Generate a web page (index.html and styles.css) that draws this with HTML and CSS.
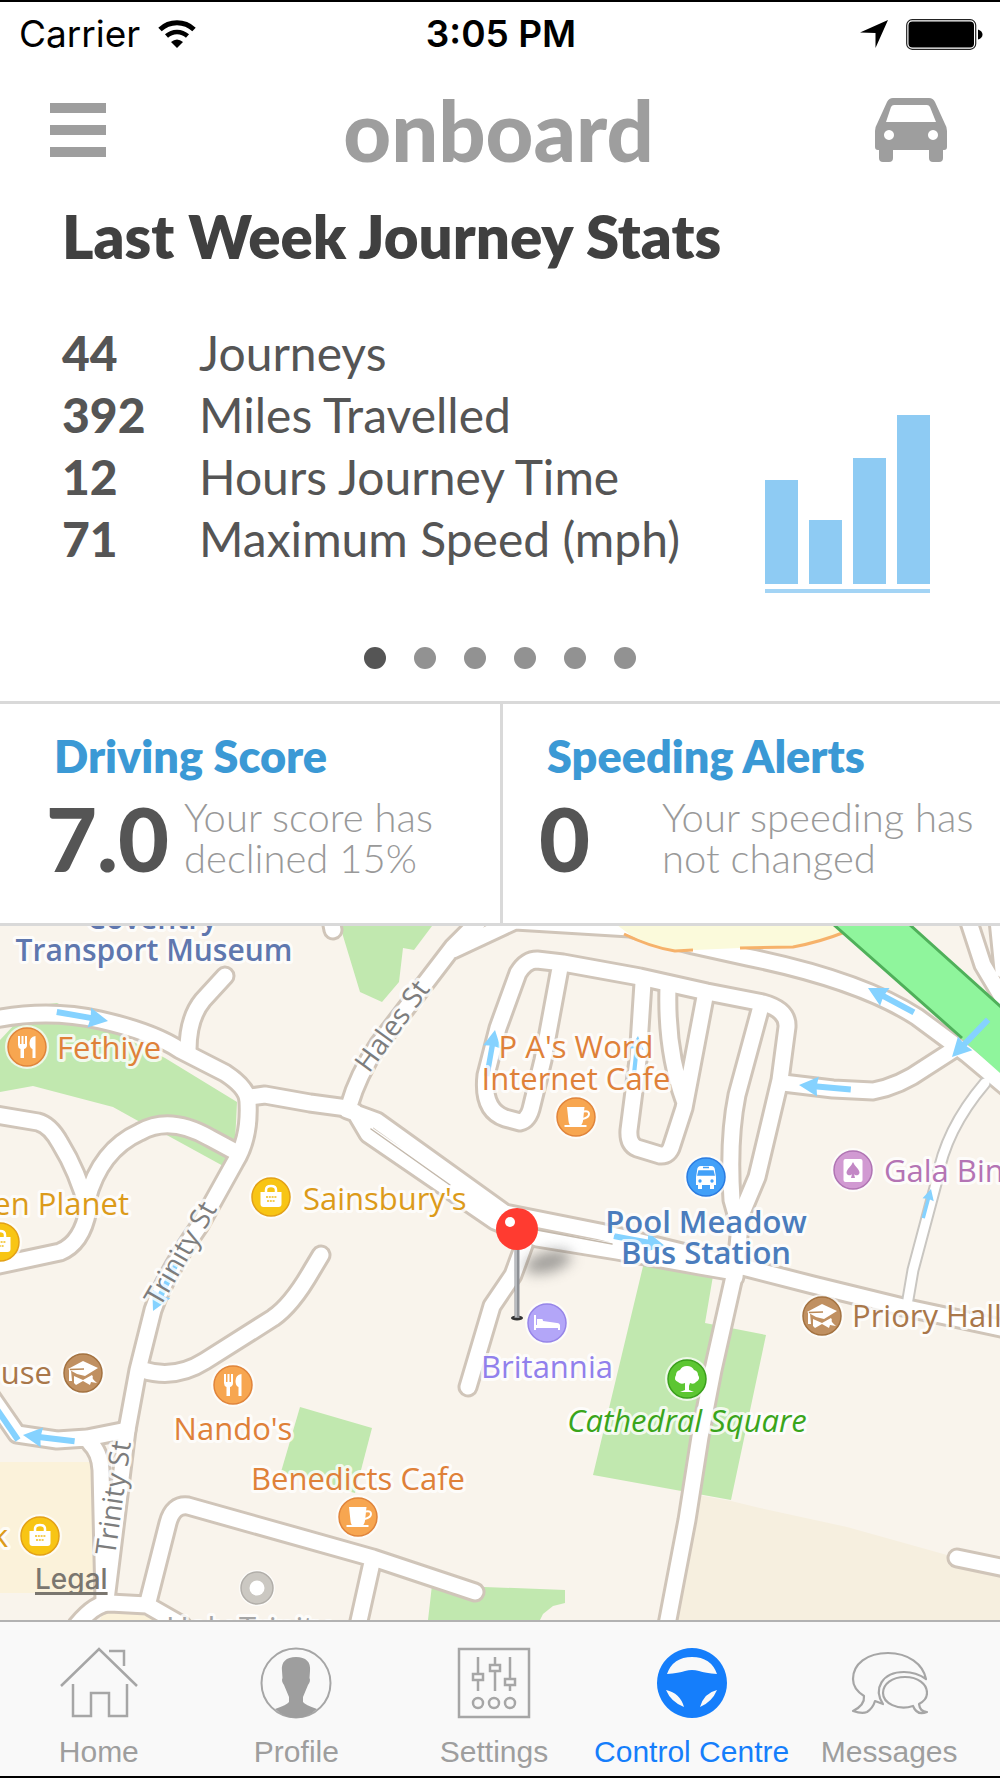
FILE: index.html
```html
<!DOCTYPE html>
<html lang="en">
<head>
<meta charset="utf-8">
<meta name="viewport" content="width=device-width, initial-scale=1">
<title>onboard – Control Centre</title>
<link rel="stylesheet" href="styles.css">
</head>
<body>
<div class="app">
  <div class="status">
    <div class="status-left">
      <span>Carrier</span>
      <svg class="wifi" viewBox="0 0 38 28" aria-hidden="true">
        <path d="M2 9.500A25 25 0 0 1 36 9.500" fill="none" stroke="#000" stroke-width="5"/>
        <path d="M8.500 16A15.500 15.500 0 0 1 29.500 16" fill="none" stroke="#000" stroke-width="4.500"/>
        <path d="M19 28L13 22Q19 17 25 22Z"/>
      </svg>
    </div>
    <span class="clock">3:05 PM</span>
    <div class="status-right">
      <svg class="locate" viewBox="0 0 28 28" aria-hidden="true"><path d="M28 0L15.500 28V13L0 12.500Z"/></svg>
      <svg class="battery" viewBox="0 0 77 31" aria-hidden="true">
        <rect x="0.700" y="0.700" width="69" height="29.600" rx="5.500" fill="#fff" stroke="#222" stroke-width="1.200"/>
        <rect x="2.500" y="2.500" width="65.500" height="26" rx="4"/>
        <path d="M72 10.500Q76.500 12 76.500 15.500T72 20.500Z"/>
      </svg>
    </div>
  </div>

  <header class="topbar">
    <button class="icon-btn menu" type="button" aria-label="Menu"><i></i><i></i><i></i></button>
    <span class="logo">onboard</span>
    <button class="icon-btn" type="button" aria-label="Vehicle">
      <svg class="car" viewBox="0 0 72 64" aria-hidden="true">
        <path fill="#9e9e9e" fill-rule="evenodd" d="M18 0H54Q58 0 60 4L70 26Q72 29 72 33V49Q72 52 69 52H68V60Q68 64 64 64H58Q54 64 54 60V52H18V60Q18 64 14 64H8Q4 64 4 60V52H3Q0 52 0 49V33Q0 29 2 26L12 4Q14 0 18 0ZM19 7Q17 7 16 9L11 24H61L55 9Q54 7 52 7ZM14 32a5 5 0 1 0 .01 0ZM58 32a5 5 0 1 0 .01 0Z"/>
      </svg>
    </button>
  </header>

  <main>
    <section class="stats">
      <h1>Last Week Journey Stats</h1>
      <div class="stats-body">
        <table>
          <tbody>
            <tr><th scope="row">44</th><td>Journeys</td></tr>
            <tr><th scope="row">392</th><td>Miles Travelled</td></tr>
            <tr><th scope="row">12</th><td>Hours Journey Time</td></tr>
            <tr><th scope="row">71</th><td>Maximum Speed (mph)</td></tr>
          </tbody>
        </table>
        <div class="chart" aria-hidden="true">
          <i style="height:104px"></i><i style="height:64px"></i><i style="height:126px"></i><i style="height:169px"></i>
        </div>
      </div>
      <div class="dots">
        <button class="on" type="button" aria-label="Page 1"></button>
        <button type="button" aria-label="Page 2"></button>
        <button type="button" aria-label="Page 3"></button>
        <button type="button" aria-label="Page 4"></button>
        <button type="button" aria-label="Page 5"></button>
        <button type="button" aria-label="Page 6"></button>
      </div>
    </section>

    <section class="cards">
      <article class="card card-score">
        <h2>Driving Score</h2>
        <div class="card-row"><strong>7.0</strong><p>Your score has<br>declined 15%</p></div>
      </article>
      <article class="card card-alerts">
        <h2>Speeding Alerts</h2>
        <div class="card-row"><strong>0</strong><p>Your speeding has<br>not changed</p></div>
      </article>
    </section>

    <section class="map" aria-label="Map">
      <svg viewBox="0 926 1000 694">
        <defs>
          <filter id="soft" x="-50%" y="-80%" width="200%" height="260%"><feGaussianBlur stdDeviation="7"/></filter>
          <g id="arrow"><path d="M-52-3H-18L-19-10L0 0L-19 10L-18 3H-52Z" fill="#85d2ff"/></g>
          <g id="food" fill="#fff"><path d="M-9-11h2v8h1.500v-8h2v8h1.500v-8h2v9q0 3-3 4V11h-3.500V2q-2.500-1-2.500-4ZM8.500-11V11h-3V2q-3-1-3-6 0-6 6-7Z"/></g>
          <g id="cup"><path d="M-9-10H8.500L7 4Q6 9 3 9H-4Q-7 9-7.500 4Z" fill="#fff"/><path d="M8-5.500q5-1 5 2.500T6.500 2" fill="none" stroke="#fff" stroke-width="2"/><path d="M-11.500 9H10.500" stroke="#fff" stroke-width="2"/></g>
          <g id="bag"><path d="M-5-4v-3q0-4 5-4t5 4v3" fill="none" stroke="#fff" stroke-width="2.500"/><path d="M-10.500-5h21v12q0 3-3 3h-15q-3 0-3-3Z" fill="#fff"/><path d="M-5 0H5.500M-4 4H4" stroke="#f1bd1b" stroke-width="1.500" stroke-dasharray="2 .8"/></g>
          <g id="cap"><path d="M-15-4L0-12L15-5L2 3L-6 1Z" fill="#fff"/><path d="M-9 3L0 7L9 2L10 4Q8 5 14 10L8 9L7 12L0 8L-7 12L-9 10ZM-14-3H-12L-11 8H-14Z" fill="#fff"/><path d="M-13-3.500L1-4" stroke="#b98957" stroke-width="1.500"/></g>
        </defs>

        <rect x="0" y="926" width="1000" height="694" fill="#f9f4ec"/>
        <g fill="#c1e8af">
          <path d="M0 1040L15 1024V1008L57 1003L165 1058L237 1102L235 1143L225 1167L163 1133L140 1122L113 1107L33 1086L0 1092Z"/>
          <path d="M340 926L360 992L382 1002L399 982L403 948L414 950L432 926Z"/>
          <path d="M645 1258L714 1270L705 1323L766 1335L731 1500L593 1475Z"/>
          <path d="M300 1407L372 1428L355 1493L281 1472Z"/>
          <path d="M432 1585L565 1590V1603L553 1606L543 1614L540 1620H428Z"/>
        </g>
        <path d="M0 1462H92L98 1593H0ZM104 1611H155V1620H100Z" fill="#fbf2da"/>
        <path d="M698 1495L731 1501L760 1508L847 1527L947 1555L1000 1567V1620H676Z" fill="#f6efdf"/>

        <g fill="none" stroke-linejoin="round" stroke-linecap="round">
          <g id="roads" stroke="#d0c5b9" stroke-width="21">
            <path id="r1" d="M-10 1020Q47 1008 100 1020T180 1050L225 1073Q248 1088 248 1102Q250 1138 235 1162L200 1225Q165 1275 153 1310L138 1370L127 1430L106 1600"/>
            <path id="r2" d="M225 976L203 1000Q188 1018 188 1050"/>
            <path id="r3" d="M250 1097L265 1095L310 1103L347 1108"/>
            <path id="r4" d="M349 1106Q358 1075 378 1045L453 947L480 920M453 950L500 928L515 921L630 928L693 945L747 957Q860 980 917 1017L967 1054L1010 1090"/>
            <path id="r5" d="M783 1083L833 1089L873 1091Q900 1086 925 1068L953 1050"/>
            <path id="r6" d="M735 1277L741 1215L757 1177L780 1080L787 1027Q788 1010 763 1003L707 992L640 977L563 963L537 960Q526 960 518 973L498 1028L486 1075Q482 1110 505 1118L520 1122Q529 1120 532 1105L543 1060L560 968"/>
            <path id="r7" d="M643 983L638 1060L629 1130Q628 1144 637 1148L660 1155Q669 1156 672 1145L684 1108L705 997M668 987Q666 1050 684 1100"/>
            <path id="r8" d="M760 1010L737 1095Q728 1140 732 1200L739 1225"/>
            <path id="r9" d="M735 1272L713 1370L700 1437L687 1520L666 1630"/>
            <path id="r10" d="M347 1110L377 1121L505 1213L600 1232L735 1265L813 1285L903 1307L1010 1330M355 1112L368 1134L495 1221L537 1238L617 1251L700 1266L735 1272"/>
            <path id="r11" d="M967 916L983 965L1008 1007M998 920L1003 970"/>
            <path id="r12" d="M524 1245L513 1275L492 1306L468 1387"/>
            <path id="r13" d="M-10 1114L38 1122Q50 1125 60 1143Q78 1172 88 1210Q82 1243 60 1252L-10 1267M87 1200Q100 1150 140 1132Q170 1115 210 1138L236 1152"/>
            <path id="r14" d="M321 1255L312 1270Q292 1305 273 1318L205 1361Q175 1380 143 1370"/>
            <path id="r15" d="M127 1430L87 1438L57 1440L17 1434L-10 1395M90 1443Q100 1452 101 1470L104 1600"/>
            <path id="r16" d="M77 1625Q95 1603 110 1603L147 1605L182 1625M148 1602L168 1523Q173 1504 188 1506L373 1558L475 1592M373 1558L357 1630"/>
            <path id="r17" d="M957 1558L1010 1569M333 930L330 915"/>
          </g>
          <path d="M985 1083Q945 1130 937 1180L913 1270L907 1305" stroke="#c9c6c1" stroke-width="13"/>
          <g stroke="#fff" stroke-width="15">
            <use href="#r1"/><use href="#r2"/><use href="#r3"/><use href="#r4"/><use href="#r5"/><use href="#r6"/><use href="#r7"/><use href="#r8"/><use href="#r9"/><use href="#r10"/><use href="#r11"/><use href="#r12"/><use href="#r13"/><use href="#r14"/><use href="#r15"/><use href="#r16"/><use href="#r17"/>
          </g>
          <path d="M985 1083Q945 1130 937 1180L913 1270L907 1305" stroke="#fff" stroke-width="9"/>
          <path d="M371 1129L450 1185M537 1230L612 1244" stroke="#c3b8ab" stroke-width="1.500"/>
        </g>

        <path d="M613 922L633 937Q650 945 673 951L740 948L793 947Q820 942 843 932V922Z" fill="#fbfadb"/>
        <path d="M624 934Q650 947 675 951L693 950M740 948L793 947Q820 942 845 932" fill="none" stroke="#f6b26b" stroke-width="3"/>
        <path d="M835 926L1000 1073V1007L910 926Z" fill="#8ff59c"/>
        <path d="M834 925L962 1038M910 925L1001 1007" stroke="#4fb05a" stroke-width="3"/>

        <use href="#arrow" transform="translate(108 1021) rotate(10)"/>
        <use href="#arrow" transform="translate(868 988) rotate(208)"/>
        <use href="#arrow" transform="translate(952 1057) rotate(134)"/>
        <use href="#arrow" transform="translate(799 1085) rotate(185)"/>
        <use href="#arrow" transform="translate(931 1189) rotate(-75) scale(.58)"/>
        <use href="#arrow" transform="translate(665 1246) rotate(11)"/>
        <use href="#arrow" transform="translate(23 1435) rotate(187)"/>
        <use href="#arrow" transform="translate(638 1036) rotate(-84) scale(.7)"/>
        <use href="#arrow" transform="translate(495 1030) rotate(-80) scale(.9)"/>
        <use href="#arrow" transform="translate(153 1311) rotate(116)"/>
        <path d="M18 1440L-4 1408" stroke="#85d2ff" stroke-width="6"/>

        <g stroke-width="1.500">
          <g transform="translate(27 1047)"><circle class="halo" r="22"/><circle r="19" fill="#f7a650" stroke="#e0843a"/><use href="#food"/></g>
          <g transform="translate(233 1385)"><circle class="halo" r="22"/><circle r="19" fill="#f7a650" stroke="#e0843a"/><use href="#food"/></g>
          <g transform="translate(576 1117)"><circle class="halo" r="22"/><circle r="19" fill="#f7a650" stroke="#e0843a"/><use href="#cup"/></g>
          <g transform="translate(358 1517)"><circle class="halo" r="22"/><circle r="19" fill="#f7a650" stroke="#e0843a"/><use href="#cup"/></g>
          <g transform="translate(271 1197)"><circle class="halo" r="22"/><circle r="19" fill="#f8c514" stroke="#e2a016"/><use href="#bag"/></g>
          <g transform="translate(0 1242)"><circle class="halo" r="22"/><circle r="19" fill="#f8c514" stroke="#e2a016"/><use href="#bag"/></g>
          <g transform="translate(40 1536)"><circle class="halo" r="22"/><circle r="19" fill="#f8c514" stroke="#e2a016"/><use href="#bag"/></g>
          <g transform="translate(83 1373)"><circle class="halo" r="22"/><circle r="19" fill="#c09061" stroke="#a3713f"/><use href="#cap"/></g>
          <g transform="translate(822 1316)"><circle class="halo" r="22"/><circle r="19" fill="#c09061" stroke="#a3713f"/><use href="#cap"/></g>
          <g transform="translate(706 1177)"><circle class="halo" r="22"/><circle r="19" fill="#42a0f8" stroke="#2a7be0"/><path d="M-9-6Q-9-11-5-11H5Q9-11 9-6L10 0V8H8V12H4V8H-4V12H-8V8H-10V0Z" fill="#fff"/><path d="M-7-6H7L8-2H-8ZM-3-9.500H3" fill="#42a0f8" stroke="#42a0f8"/><circle cx="-6" cy="4" r="1.700" fill="#42a0f8"/><circle cx="6" cy="4" r="1.700" fill="#42a0f8"/></g>
          <g transform="translate(853 1170)"><circle class="halo" r="22"/><circle r="19" fill="#d19ad2" stroke="#b074b3"/><rect x="-9.500" y="-11" width="19" height="23" rx="2" fill="#fff"/><path d="M0-8Q1-5 5-1Q8 3 5 5Q2 6 1 4L2 8H-2L-1 4Q-2 6-5 5Q-8 3-5-1Q-1-5 0-8Z" fill="#c287c5"/></g>
          <g transform="translate(687 1379)"><circle class="halo" r="22"/><circle r="19" fill="#5cc632" stroke="#3a9f1c"/><path d="M-2 4Q-6 6-9 3Q-14 1-11-4Q-11-8-7-9Q-5-13 0-13Q5-13 7-9Q11-8 11-4Q14 0 9 3Q7 6 3 4L2 7V11L7 13H-7L-2 11V7Z" fill="#fff"/></g>
          <g transform="translate(547 1323)"><circle class="halo" r="22"/><circle r="19" fill="#b3a6f8" stroke="#9684e8"/><path d="M-13-8H-11V2H13V7H11V5H-11V7H-13ZM-10-1V-4H-5Q-4-4-4-2L10 0Q13 0 13 3H-10Z" fill="#fff"/></g>
          <g transform="translate(257 1588)"><circle class="halo" r="18"/><circle r="16" fill="#cbc8c2" stroke="#b1aea9"/><circle r="7.500" fill="#fff"/></g>
        </g>

        <g class="labels">
          <g class="museum mid"><text x="152" y="929">Coventry</text><text x="154" y="961">Transport Museum</text></g>
          <g class="orange">
            <text x="57" y="1059">Fethiye</text>
            <g class="mid"><text x="576" y="1058">P A's Word</text><text x="576" y="1090">Internet Cafe</text><text x="233" y="1440">Nando's</text><text x="358" y="1490">Benedicts Cafe</text></g>
          </g>
          <g class="gold"><text x="303" y="1210">Sainsbury's</text><text class="end" x="129" y="1215">en Planet</text><text class="end" x="8" y="1547">k</text></g>
          <g class="bus mid"><text x="706" y="1233">Pool Meadow</text><text x="706" y="1264">Bus Station</text></g>
          <text class="plum" x="884" y="1182">Gala Bingo</text>
          <g class="brown"><text x="852" y="1327">Priory Hall</text><text class="end" x="52" y="1384">use</text></g>
          <text class="green mid" x="687" y="1432">Cathedral Square</text>
          <text class="violet mid" x="547" y="1378">Britannia</text>
          <text class="grey mid" x="248" y="1639">Holy Trinity</text>
          <g class="street">
            <text transform="translate(369 1074) rotate(-54)">Hales St</text>
            <text transform="translate(160 1308) rotate(-60)">Trinity St</text>
            <text transform="translate(115 1556) rotate(-82)">Trinity St</text>
          </g>
        </g>

        <ellipse cx="548" cy="1262" rx="24" ry="10" transform="rotate(-15 548 1262)" fill="#555" opacity=".55" filter="url(#soft)"/>
        <ellipse cx="517" cy="1318" rx="6" ry="2.500" fill="#333"/>
        <path d="M517 1245V1318" stroke="#8e9196" stroke-width="5"/><path d="M516 1245V1317" stroke="#b9bcc0" stroke-width="2"/>
        <circle cx="517" cy="1229" r="21" fill="#ff3b30"/>
        <circle cx="510" cy="1222" r="5" fill="#fff"/>
      </svg>
      <a class="legal" href="#legal">Legal</a>
    </section>
  </main>

  <nav class="tabs">
    <a href="#home">
      <svg viewBox="0 0 78 72" aria-hidden="true"><path d="M1 39L39 2L77 39M13 37V69H31V46H49V69H67V37M49 4H64V19" fill="none" stroke="#a6a6a6" stroke-width="2.500"/></svg>
      <span>Home</span>
    </a>
    <a href="#profile">
      <svg viewBox="0 0 78 72" aria-hidden="true"><circle cx="39" cy="36" r="34.500" fill="none" stroke="#a6a6a6" stroke-width="2"/><path d="M39 10C49 10 54 15 53 24L52.500 31Q54 34 51 38L46 50V55Q48 58 60 62Q50 71 39 71T18 62Q30 58 32 55V50L27 38Q24 34 25.500 31L25 24C24 15 29 10 39 10Z" fill="#9e9e9e"/></svg>
      <span>Profile</span>
    </a>
    <a href="#settings">
      <svg viewBox="0 0 78 72" aria-hidden="true"><g fill="none" stroke="#a6a6a6" stroke-width="2.500"><path d="M4 2H74V70H4ZM23 10V27M23 33V44M40 10V18M40 24V44M55 10V32M55 38V44"/><path d="M18 27H28V33H18ZM35 18H45V24H35ZM50 32H60V38H50Z"/><circle cx="23" cy="56" r="5"/><circle cx="39" cy="56" r="5"/><circle cx="55" cy="56" r="5"/></g></svg>
      <span>Settings</span>
    </a>
    <a class="active" href="#control" aria-current="page">
      <svg viewBox="0 0 78 72" aria-hidden="true"><path fill="#157efb" fill-rule="evenodd" d="M39 1a35 35 0 1 1-.01 0ZM14 27Q26 26 32 24Q39 22 46 24Q52 26 64 27Q58 10 39 10T14 27ZM13 43Q18 55 31 60Q27 46 13 43ZM64 43Q59 55 47 60Q51 46 64 43Z"/></svg>
      <span>Control Centre</span>
    </a>
    <a href="#messages">
      <svg viewBox="0 0 78 72" aria-hidden="true"><g fill="none" stroke="#a6a6a6" stroke-width="2.200" stroke-linejoin="round"><path d="M76 32C73 17 58 6 38 6C17 6 3 17 3 32Q3 42 14 49Q15 58 3 64Q12 67 17 65Q23 61 25 54L33 57C23 42 32 25 54 25Q66 25 76 32Z"/><path d="M55 30C68 30 77 37 77 46Q77 53 69 57Q70 65 77 65Q67 69 63 59C48 64 33 56 33 46C33 37 42 30 55 30Z"/></g></svg>
      <span>Messages</span>
    </a>
  </nav>
</div>
</body>
</html>
```
FILE: styles.css
```css
* { box-sizing: border-box; }
body { margin: 0; background: #fff; font-family: Lato, "Open Sans", sans-serif; color: #555; }
h1, h2, p { margin: 0; }
button { border: 0; padding: 0; background: none; cursor: pointer; }
svg { display: block; flex: none; }

.app { display: flex; flex-direction: column; min-height: 100vh; border: solid #000; border-width: 2px 0; }

.status { display: grid; grid-template-columns: 1fr auto 1fr; align-items: center; height: 64px; padding: 0 17px 0 19px; font: 400 37px/40px Inter, "Liberation Sans", sans-serif; color: #000; }
.status-left, .status-right { display: flex; align-items: center; gap: 18px; }
.status-right { justify-content: flex-end; }
.clock { font-weight: 600; }
.wifi { width: 38px; height: 28px; }
.locate { width: 28px; height: 28px; }
.battery { width: 77px; height: 31px; }

.topbar { display: grid; grid-template-columns: 1fr auto 1fr; align-items: center; height: 124px; padding: 4px 53px 0 50px; }
.icon-btn { justify-self: start; }
.icon-btn:last-child { justify-self: end; }
.menu { display: grid; gap: 12px; width: 56px; }
.menu i { height: 10px; background: #9e9e9e; }
.logo { font-size: 83px; font-weight: 900; line-height: 96px; color: #9e9e9e; }
.car { width: 72px; height: 64px; }

.stats { padding: 10px 70px 0 62px; }
.stats h1 { font-size: 60px; font-weight: 800; line-height: 72px; color: #404040; }
.stats-body { display: flex; justify-content: space-between; align-items: flex-start; margin-top: 50px; }
table { border-collapse: collapse; font-size: 48px; line-height: 62px; white-space: nowrap; }
th, td { padding: 0; text-align: left; font-weight: 400; }
th { width: 137px; font-weight: 900; }
.chart { display: flex; align-items: flex-end; align-self: flex-end; gap: 11px; margin-top: 93px; padding-bottom: 5px; border-bottom: 4px solid #a3d4f5; }
.chart i { width: 33px; background: #8ecbf3; }
.dots { display: flex; justify-content: center; gap: 28px; margin: 54px 0 32px 8px; }
.dots button { width: 22px; height: 22px; border-radius: 50%; background: #929292; }
.dots .on { background: #555; }

.cards { display: grid; grid-template-columns: 1fr 1fr; border: solid #d9d9d9; border-width: 3px 0; }
.card { height: 219px; padding-top: 24px; }
.card + .card { border-left: 3px solid #d9d9d9; }
.card h2 { font-size: 45px; font-weight: 800; line-height: 56px; color: #3b99d5; }
.card-row { display: flex; align-items: center; height: 108px; }
.card strong { font-size: 88px; font-weight: 900; line-height: 100px; }
.card p { font-size: 40px; font-weight: 300; line-height: 41px; color: #999; white-space: nowrap; }
.card-score { padding-left: 46px; }
.card-alerts { padding-left: 36px; }
.card-score h2, .card-alerts h2 { padding-left: 8px; }
.card-score strong { width: 138px; }
.card-alerts strong { width: 123px; }

.map { position: relative; overflow: hidden; }
.map svg { width: 100%; height: auto; }
.halo { fill: #fff; fill-opacity: .7; }
.labels { font: 500 31px "Open Sans", "Noto Sans", sans-serif; }
.labels text { paint-order: stroke; stroke: #fffc; stroke-width: 6px; stroke-linejoin: round; }
.mid { text-anchor: middle; }
.end { text-anchor: end; }
.museum { fill: #5f77ae; font-size: 30px; font-weight: 600; }
.orange { fill: #df8139; }
.gold { fill: #dc9b1a; }
.bus { fill: #4b7dbd; font-weight: 600; }
.plum { fill: #b474b4; }
.brown { fill: #a9774a; }
.green { fill: #3aa51b; font-style: italic; }
.violet { fill: #9180ec; }
.grey { fill: #a5a5a5; }
.street { fill: #7d7d7d; font-size: 28px; }
.legal { position: absolute; left: 35px; bottom: 24px; font: 500 28px/34px Inter, sans-serif; color: #7a766f; text-decoration-thickness: 3px; text-underline-offset: 3px; text-decoration-skip-ink: none; }

.tabs { display: grid; grid-template-columns: repeat(5, 1fr); flex: 1; min-height: 156px; padding: 25px 12px 0 0; border-top: 2px solid #b2b2b2; background: #f9f9f9; }
.tabs a { display: flex; flex-direction: column; align-items: center; gap: 16px; font: 400 30px/34px "Liberation Sans", Arial, sans-serif; color: #9e9e9e; text-decoration: none; white-space: nowrap; }
.tabs svg { width: 78px; height: 72px; }
.tabs .active { color: #157efb; }
```
